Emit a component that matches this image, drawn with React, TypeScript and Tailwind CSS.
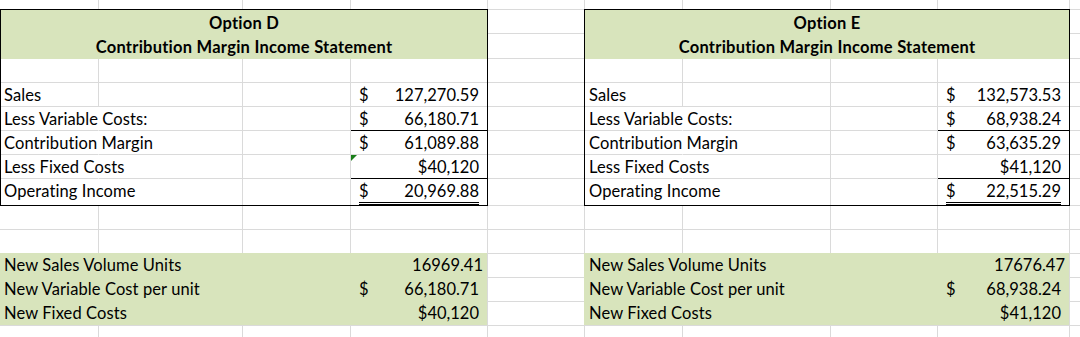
import type { ReactNode } from "react"

const LINE = "border-[#dadada]"
const GREEN = "bg-[#d8e4bc]"

type Row = {
    label: string
    value: string
    dollar?: boolean
    rule?: boolean
    flag?: boolean
    overflow?: boolean
}

type Sheet = {
    title: string
    rows: Row[]
    total: string
    units: string
    vc: string
    fixed: string
}

type Frame = {
    outer: string[]
    inner: string[]
    box: string
    pad: string
    greenWidth: string
    greenLabel: string
    greenValue: string
}

const optionD: Sheet = {
    title: "Option D",
    rows: [
        { label: "Sales", value: "127,270.59", dollar: true },
        { label: "Less Variable Costs:", value: "66,180.71", dollar: true, rule: true, overflow: true },
        { label: "Contribution Margin", value: "61,089.88", dollar: true, overflow: true },
        { label: "Less Fixed Costs", value: "$40,120", rule: true, flag: true, overflow: true },
    ],
    total: "20,969.88",
    units: "16969.41",
    vc: "66,180.71",
    fixed: "$40,120",
}

const optionE: Sheet = {
    title: "Option E",
    rows: [
        { label: "Sales", value: "132,573.53", dollar: true },
        { label: "Less Variable Costs:", value: "68,938.24", dollar: true, rule: true, overflow: true },
        { label: "Contribution Margin", value: "63,635.29", dollar: true, overflow: true },
        { label: "Less Fixed Costs", value: "$41,120", rule: true, overflow: true },
    ],
    total: "22,515.29",
    units: "17676.47",
    vc: "68,938.24",
    fixed: "$41,120",
}

const left: Frame = {
    outer: ["w-[99px] border-r", "w-[144px] border-r", "w-[108px] border-r", "w-[137px] border-r"],
    inner: ["w-[98px]", "w-[144px]", "w-[108px]", "w-[136px]"],
    box: "w-[488px]",
    pad: "pl-[3px]",
    greenWidth: "w-[488px]",
    greenLabel: "w-[351px] pl-[4px]",
    greenValue: "w-[136px]",
}

const right: Frame = {
    outer: ["w-[99px] border-l border-r", "w-[148px] border-r", "w-[107px] border-r", "w-[132px] border-r"],
    inner: ["w-[98px]", "w-[148px]", "w-[107px]", "w-[131px]"],
    box: "w-[486px]",
    pad: "pl-[4px]",
    greenWidth: "w-[486px]",
    greenLabel: "w-[354px] pl-[5px]",
    greenValue: "w-[131px]",
}

const spacerRows = [
    "h-[10px]", "h-[24px]", "h-[25px]", "h-[24px]", "h-[24px]", "h-[24px]", "h-[24px]",
    "h-[24px]", "h-[27px]", "h-[24px]", "h-[24px]", "h-[24px]", "h-[24px]", "h-[24px]",
]

const Spacer = ({ width }: { width: string }) => (
    <div className={`${width} flex flex-col`}>
        {spacerRows.map((h, i) => (
            <div key={i} className={`${h} border-b ${LINE}`} />
        ))}
        <div className="flex-1" />
    </div>
)

const OuterRow = ({ frame, height, bottom }: { frame: Frame; height: string; bottom?: boolean }) => (
    <div className={`flex ${height}`}>
        {frame.outer.map((c, i) => (
            <div key={i} className={`${c} ${LINE} ${bottom ? "border-b" : ""}`} />
        ))}
    </div>
)

const Money = ({ row }: { row: Row }) =>
    row.dollar ? (
        <div className="flex justify-between px-[8px] pt-[1px]">
            <span>$</span>
            <span>{row.value}</span>
        </div>
    ) : (
        <div className="text-right pr-[8px] pt-[1px]">{row.value}</div>
    )

const BoxRow = ({ frame, row, children }: { frame: Frame; row?: Row; children?: ReactNode }) => (
    <div className="flex h-[24px] leading-[23px]">
        <div
            className={`${frame.inner[0]} ${frame.pad} pt-[1px] tracking-[0.1px] border-r border-b whitespace-nowrap border-b-[#dadada] ${
                row?.overflow ? "border-r-transparent" : "border-r-[#dadada]"
            }`}
        >
            {row?.label}
        </div>
        <div className={`${frame.inner[1]} border-r border-b ${LINE}`} />
        <div className={`${frame.inner[2]} border-r border-b ${LINE}`} />
        <div className={`${frame.inner[3]} relative border-b ${row?.rule ? "border-black" : LINE}`}>
            {row?.flag && (
                <span className="absolute left-0 top-0 w-0 h-0 border-t-[6px] border-r-[6px] border-t-[#1a7f1a] border-r-transparent" />
            )}
            {children}
        </div>
    </div>
)

const Statement = ({ frame, sheet }: { frame: Frame; sheet: Sheet }) => (
    <div className="flex flex-col">
        <OuterRow frame={frame} height="h-[9px]" />
        <div className={`${frame.box} h-[197px] border border-black flex flex-col`}>
            <div className={`h-[49px] ${GREEN} pt-[1px] flex flex-col items-center font-bold leading-[24px] tracking-[0.25px]`}>
                <div>{sheet.title}</div>
                <div>Contribution Margin Income Statement</div>
            </div>
            <BoxRow frame={frame} />
            {sheet.rows.map((row) => (
                <BoxRow key={row.label} frame={frame} row={row}>
                    <Money row={row} />
                </BoxRow>
            ))}
            <div className="flex h-[26px]">
                <div className={`${frame.inner[0]} ${frame.pad} pt-[1px] tracking-[0.1px] whitespace-nowrap leading-[23px]`}>
                    Operating Income
                </div>
                <div className={`${frame.inner[1]} border-r ${LINE}`} />
                <div className={`${frame.inner[2]} border-r ${LINE}`} />
                <div className={frame.inner[3]}>
                    <div className="mx-[8px] flex justify-between pt-[1px] leading-[22px] border-b-[3px] border-double border-black">
                        <span>$</span>
                        <span>{sheet.total}</span>
                    </div>
                </div>
            </div>
        </div>
        <OuterRow frame={frame} height="h-[24px]" bottom />
        <OuterRow frame={frame} height="h-[23px]" />
        <div className={`${frame.greenWidth} h-[73px] ${GREEN} border-r border-b ${LINE} flex flex-col leading-[23px]`}>
            <div className="flex h-[24px] pt-[1px]">
                <div className={`${frame.greenLabel} tracking-[0.1px] whitespace-nowrap`}>New Sales Volume Units</div>
                <div className={`${frame.greenValue} text-right pr-[4px]`}>{sheet.units}</div>
            </div>
            <div className="flex h-[24px] pt-[1px]">
                <div className={`${frame.greenLabel} tracking-[0.1px] whitespace-nowrap`}>New Variable Cost per unit</div>
                <div className={`${frame.greenValue} flex justify-between px-[8px]`}>
                    <span>$</span>
                    <span>{sheet.vc}</span>
                </div>
            </div>
            <div className="flex h-[24px] pt-[1px]">
                <div className={`${frame.greenLabel} tracking-[0.1px] whitespace-nowrap`}>New Fixed Costs</div>
                <div className={`${frame.greenValue} text-right pr-[8px]`}>{sheet.fixed}</div>
            </div>
        </div>
        <OuterRow frame={frame} height="flex-1" />
    </div>
)

export default function App() {
    return (
        <div className="flex w-[1080px] h-[337px] overflow-hidden bg-white text-black text-[16.5px] font-[Lato,sans-serif]">
            <Statement frame={left} sheet={optionD} />
            <Spacer width="w-[96px]" />
            <Statement frame={right} sheet={optionE} />
            <Spacer width="w-[10px]" />
        </div>
    )
}
